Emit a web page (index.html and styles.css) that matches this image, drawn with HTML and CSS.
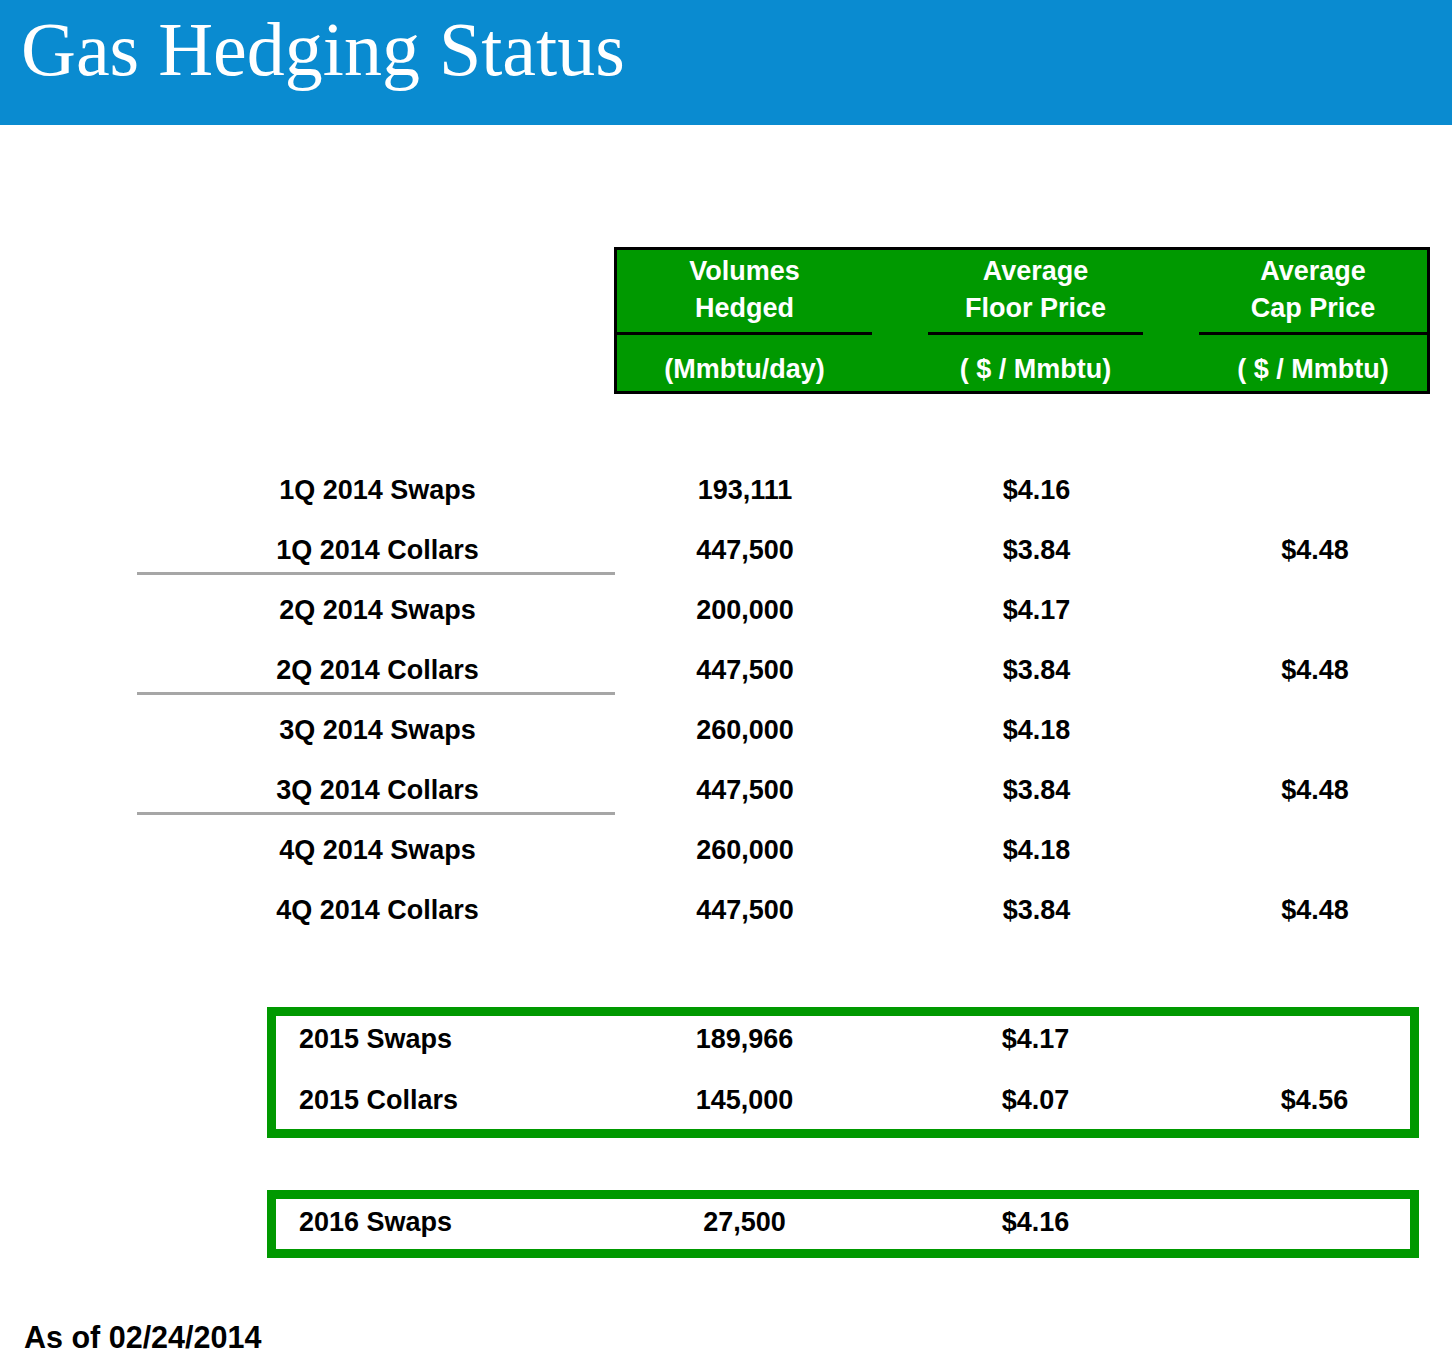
FILE: index.html
```html
<!DOCTYPE html>
<html lang="en">
<head>
<meta charset="utf-8">
<title>Gas Hedging Status</title>
<link rel="stylesheet" href="styles.css">
</head>
<body>
<header class="banner">
  <h1 class="title">Gas Hedging Status</h1>
</header>

<main class="content">
  <div class="head-box">
    <div class="head-cell">
      <div class="head-top">Volumes<br>Hedged</div>
      <div class="head-unit">(Mmbtu/day)</div>
    </div>
    <div class="head-cell">
      <div class="head-top">Average<br>Floor Price</div>
      <div class="head-unit">( $ / Mmbtu)</div>
    </div>
    <div class="head-cell">
      <div class="head-top">Average<br>Cap Price</div>
      <div class="head-unit">( $ / Mmbtu)</div>
    </div>
  </div>

  <div class="rows">
    <div class="row"><div class="lbl">1Q 2014 Swaps</div><div class="c1">193,111</div><div class="c2">$4.16</div><div class="c3"></div></div>
    <div class="row"><div class="lbl">1Q 2014 Collars</div><div class="c1">447,500</div><div class="c2">$3.84</div><div class="c3">$4.48</div></div>
    <div class="sep"></div>
    <div class="row"><div class="lbl">2Q 2014 Swaps</div><div class="c1">200,000</div><div class="c2">$4.17</div><div class="c3"></div></div>
    <div class="row"><div class="lbl">2Q 2014 Collars</div><div class="c1">447,500</div><div class="c2">$3.84</div><div class="c3">$4.48</div></div>
    <div class="sep"></div>
    <div class="row"><div class="lbl">3Q 2014 Swaps</div><div class="c1">260,000</div><div class="c2">$4.18</div><div class="c3"></div></div>
    <div class="row"><div class="lbl">3Q 2014 Collars</div><div class="c1">447,500</div><div class="c2">$3.84</div><div class="c3">$4.48</div></div>
    <div class="sep"></div>
    <div class="row"><div class="lbl">4Q 2014 Swaps</div><div class="c1">260,000</div><div class="c2">$4.18</div><div class="c3"></div></div>
    <div class="row"><div class="lbl">4Q 2014 Collars</div><div class="c1">447,500</div><div class="c2">$3.84</div><div class="c3">$4.48</div></div>
  </div>

  <div class="year-box year-2015">
    <div class="brow"><div class="lbl">2015 Swaps</div><div class="c1">189,966</div><div class="c2">$4.17</div><div class="c3"></div></div>
    <div class="brow"><div class="lbl">2015 Collars</div><div class="c1">145,000</div><div class="c2">$4.07</div><div class="c3">$4.56</div></div>
  </div>

  <div class="year-box year-2016">
    <div class="brow"><div class="lbl">2016 Swaps</div><div class="c1">27,500</div><div class="c2">$4.16</div><div class="c3"></div></div>
  </div>

  <p class="asof">As of 02/24/2014</p>
</main>
</body>
</html>
```

FILE: styles.css
```css
html, body {
  margin: 0;
  padding: 0;
  background: #ffffff;
  overflow: hidden;
}

body {
  width: 1452px;
  font-family: "Liberation Sans", Arial, sans-serif;
  color: #000;
}

.banner {
  height: 125px;
  background: #0a8bd0;
  box-sizing: border-box;
  padding: 11px 0 0 21px;
}

.title {
  margin: 0;
  font-family: "Liberation Serif", "Times New Roman", serif;
  font-weight: normal;
  font-size: 76px;
  line-height: 76px;
  color: #ffffff;
}

.content {
  padding-left: 137px;
}

/* header box */
.head-box {
  margin: 122px 0 0 477px;
  width: 810px;
  border: 3px solid #000;
  background: #009900;
  display: grid;
  grid-template-columns: 255px 215px 228px;
  column-gap: 56px;
  color: #fff;
  font-weight: bold;
  font-size: 27px;
  text-align: center;
}

.head-top {
  height: 85px;
  box-sizing: border-box;
  padding-top: 3px;
  line-height: 37px;
  border-bottom: 3px solid #000;
}

.head-unit {
  height: 56px;
  box-sizing: border-box;
  padding-top: 20px;
  line-height: 28px;
}

/* data rows */
.rows {
  margin-top: 66px;
}

.row,
.brow {
  display: grid;
  font-weight: bold;
  font-size: 27px;
}

.row {
  grid-template-columns: 481px 254px 57px 215px 57px 228px;
  height: 60px;
  line-height: 60px;
}

.row .lbl {
  text-align: center;
}

.c1 { grid-column: 2; text-align: center; }
.c2 { grid-column: 4; text-align: center; }
.c3 { grid-column: 6; text-align: center; }

.sep {
  width: 478px;
  height: 3px;
  background: #a6a6a6;
  margin: -8px 0 5px;
}

/* year boxes */
.year-box {
  margin-left: 130px;
  width: 1152px;
  box-sizing: border-box;
  border: 9px solid #009900;
}

.year-2015 {
  margin-top: 67px;
  padding-bottom: 6px;
  display: flex;
  flex-direction: column;
  row-gap: 15px;
}

.year-2016 {
  margin-top: 52px;
  padding-bottom: 4px;
}

.brow {
  grid-template-columns: 341px 255px 56px 215px 56px 1fr;
  line-height: 46px;
  height: 46px;
}

.brow .lbl {
  padding-left: 23px;
}

.brow .c3 {
  padding-left: 20px;
}

.asof {
  margin: 64px 0 0 -113px;
  font-weight: bold;
  font-size: 30.5px;
  line-height: 30px;
}
```
